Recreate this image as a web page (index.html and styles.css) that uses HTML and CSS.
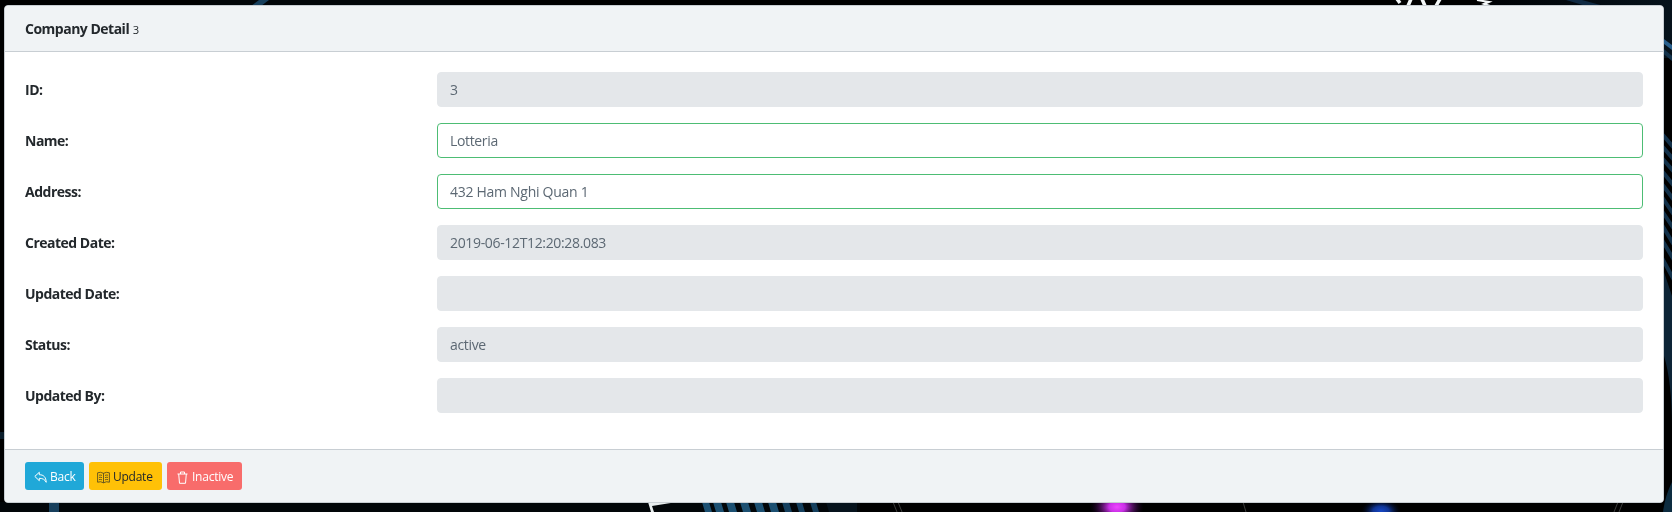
FILE: index.html
```html
<!DOCTYPE html>
<html lang="en">
<head>
<meta charset="utf-8">
<title>Company Detail</title>
<link rel="stylesheet" href="styles.css">
</head>
<body>
<svg class="backdrop" viewBox="0 0 1672 512" aria-hidden="true">
  <defs>
    <radialGradient id="magenta"><stop offset="0" stop-color="#ee45ff"/><stop offset=".3" stop-color="#c92fe6"/><stop offset="1" stop-color="#200030" stop-opacity="0"/></radialGradient>
    <radialGradient id="blue"><stop offset="0" stop-color="#1746c4"/><stop offset=".4" stop-color="#0f3494"/><stop offset="1" stop-color="#000820" stop-opacity="0"/></radialGradient>
    <linearGradient id="topRight"><stop offset="0" stop-color="#000205"/><stop offset="1" stop-color="#06121b"/></linearGradient>
  </defs>
  <path fill="#000" d="M0 0h1672v512H0z"/>
  <path fill="#020609" d="M0 502h860v10H0zM200 0h250v6H200z"/>
  <path fill="url(#topRight)" d="M1490 0h182v58h-182z"/>
  <path fill="#0a1d2b" d="M0 432h5v7H0z"/>
  <path fill="#173f5c" d="M251 6l8-6h10l-8 6zM49 502h10v10H49z"/>
  <path fill="#102a43" d="M1566 0h16l22 6h-18z"/>
  <g fill="none" stroke="#f4f7f8" stroke-width="3.500">
    <path d="M1397 -1l3 4M1411 -1l-3 7M1422 -1l3 7M1440 -1l-4 7"/>
    <path stroke-width="2" d="M1477 0l12 2-5 2 6 2"/>
  </g>
  <g fill="none" stroke="#12314a" stroke-width="4">
    <path stroke="#285f8c" d="M1662 40l12 9"/>
    <path d="M1662 50l12 10"/>
    <path d="M1662 134l12 14M1662 146l12 14M1662 158l12 14M1662 171l12 15M1662 184l12 16M1662 197l12 18M1662 211l12 18M1662 225l12 20M1662 240l12 20M1662 258l12 22"/>
  </g>
  <path fill="#0d2436" d="M1664 272l8 24v132q0-46-8-72z"/>
  <path fill="#0d2c40" d="M1663 512q2-16 9-30v30z"/>
  <path fill="#1c5072" d="M702 502h7l3 10h-7zM713 502h8l3 10h-8zM726 502h8l3 10h-8zM740 502h8l3 10h-8zM754 502h8l3 10h-8zM768 502h8l3 10h-8z"/>
  <path fill="#15405e" d="M782 502h7l3 10h-7zM796 502h6l3 10h-6zM810 502h6l3 10h-6z"/>
  <path fill="#06131d" d="M826 502h31v10h-28z"/>
  <path fill="#e8edee" d="M648 502h29l-25 4 2 6h-3z"/>
  <path fill="none" stroke="#3c3c3c" d="M893 502l4 10M898 502l4 10M1243 502l3 10M1618 502l-4 10M1623 502l-4 10"/>
  <ellipse cx="1117" cy="507" rx="27" ry="18" fill="url(#magenta)"/>
  <ellipse cx="1381" cy="511" rx="20" ry="12" fill="url(#blue)"/>
</svg>
<main class="card">
  <header class="card-header"><strong class="title">Company Detail</strong> <small class="sub">3</small></header>
  <form class="card-body">
    <div class="row"><label>ID:</label><div class="control disabled">3</div></div>
    <div class="row"><label>Name:</label><div class="control valid">Lotteria</div></div>
    <div class="row"><label>Address:</label><div class="control valid address">432 Ham Nghi Quan 1</div></div>
    <div class="row"><label>Created Date:</label><div class="control disabled">2019-06-12T12:20:28.083</div></div>
    <div class="row"><label>Updated Date:</label><div class="control disabled"></div></div>
    <div class="row"><label>Status:</label><div class="control disabled">active</div></div>
    <div class="row"><label>Updated By:</label><div class="control disabled"></div></div>
  </form>
  <footer class="card-footer">
    <button class="btn back" type="button">
      <svg class="icon" viewBox="0 0 13 13"><path d="M.8 5.4L5.3 1.3v2.4c4.3 0 6.7 2.4 6.9 7.6C10.800 8.500 9 7.400 5.300 7.300v2.400z"/></svg><span>Back</span>
    </button>
    <button class="btn update" type="button">
      <svg class="icon" viewBox="0 0 13 13"><path d="M6.500 2.300Q3.500.600.600 1.800v9.400q3-1.200 5.900.600 2.900-1.800 5.900-.600V1.800q-2.900-1.200-5.900.500zM6.500 2.300v9.500M2 4.200q1.500-.4 3 .2M2 6.400q1.500-.4 3 .2M2 8.600q1.500-.4 3 .2M8 4.400q1.500-.6 3-.2M8 6.600q1.500-.6 3-.2M8 8.800q1.500-.6 3-.2"/></svg><span>Update</span>
    </button>
    <button class="btn inactive" type="button">
      <svg class="icon" viewBox="0 0 13 13"><path d="M1.500 3h10M4.500 3V1h4v2M2.700 3l.8 9.300h6l.8-9.300"/></svg><span>Inactive</span>
    </button>
  </footer>
</main>
</body>
</html>
```
FILE: styles.css
```css
* { box-sizing: border-box; }
body {
  margin: 0;
  height: 512px;
  padding: 5px 8px 9px 4px;
  overflow: hidden;
  background: #000;
  color: #23282c;
  font: 14px/21px "Open Sans", "Noto Sans", sans-serif;
}
.backdrop { position: fixed; inset: 0; width: 1672px; height: 512px; z-index: -1; }
.card {
  display: flex;
  flex-direction: column;
  height: 498px;
  border: 1px solid #c8ced3;
  border-radius: 4px;
  background: #fff;
  overflow: hidden;
}
.card-header {
  height: 46px;
  padding: 12px 20px;
  background: #f0f3f5;
  border-bottom: 1px solid #c8ced3;
}
.title, label { font-weight: 700; letter-spacing: -.5px; }
.sub { font-size: 11.2px; }
.card-body { flex: 1; padding: 20px; }
.row { display: grid; grid-template-columns: 412px 1fr; margin-bottom: 16px; }
label { padding-top: 7px; }
.control {
  height: 35px;
  padding: 6px 12px;
  border: 1px solid #e4e7ea;
  border-radius: 4px;
  color: #5c6873;
  letter-spacing: -.34px;
}
.address { letter-spacing: -.28px; }
.disabled { background: #e4e7ea; }
.valid { border-color: #4dbd74; }
.card-footer {
  display: flex;
  gap: 5px;
  height: 53px;
  padding: 12px 20px;
  background: #f0f3f5;
  border-top: 1px solid #c8ced3;
}
.btn {
  display: flex;
  align-items: center;
  gap: 3px;
  height: 28px;
  padding: 2px 0 0 9px;
  border: 0;
  border-radius: 3px;
  font: 12px/18px "Open Sans", "Noto Sans", sans-serif;
  letter-spacing: -.25px;
  white-space: nowrap;
}
.back { width: 59px; background: #20a8d8; color: #fff; }
.update { width: 73px; padding-left: 8px; background: #ffc107; color: #23282c; }
.inactive { width: 75px; background: #f86c6b; color: #fff; }
.icon { width: 13px; height: 13px; flex: none; fill: none; stroke: currentColor; stroke-width: 1; }
.update .icon { stroke-width: .8; opacity: .85; }
```
